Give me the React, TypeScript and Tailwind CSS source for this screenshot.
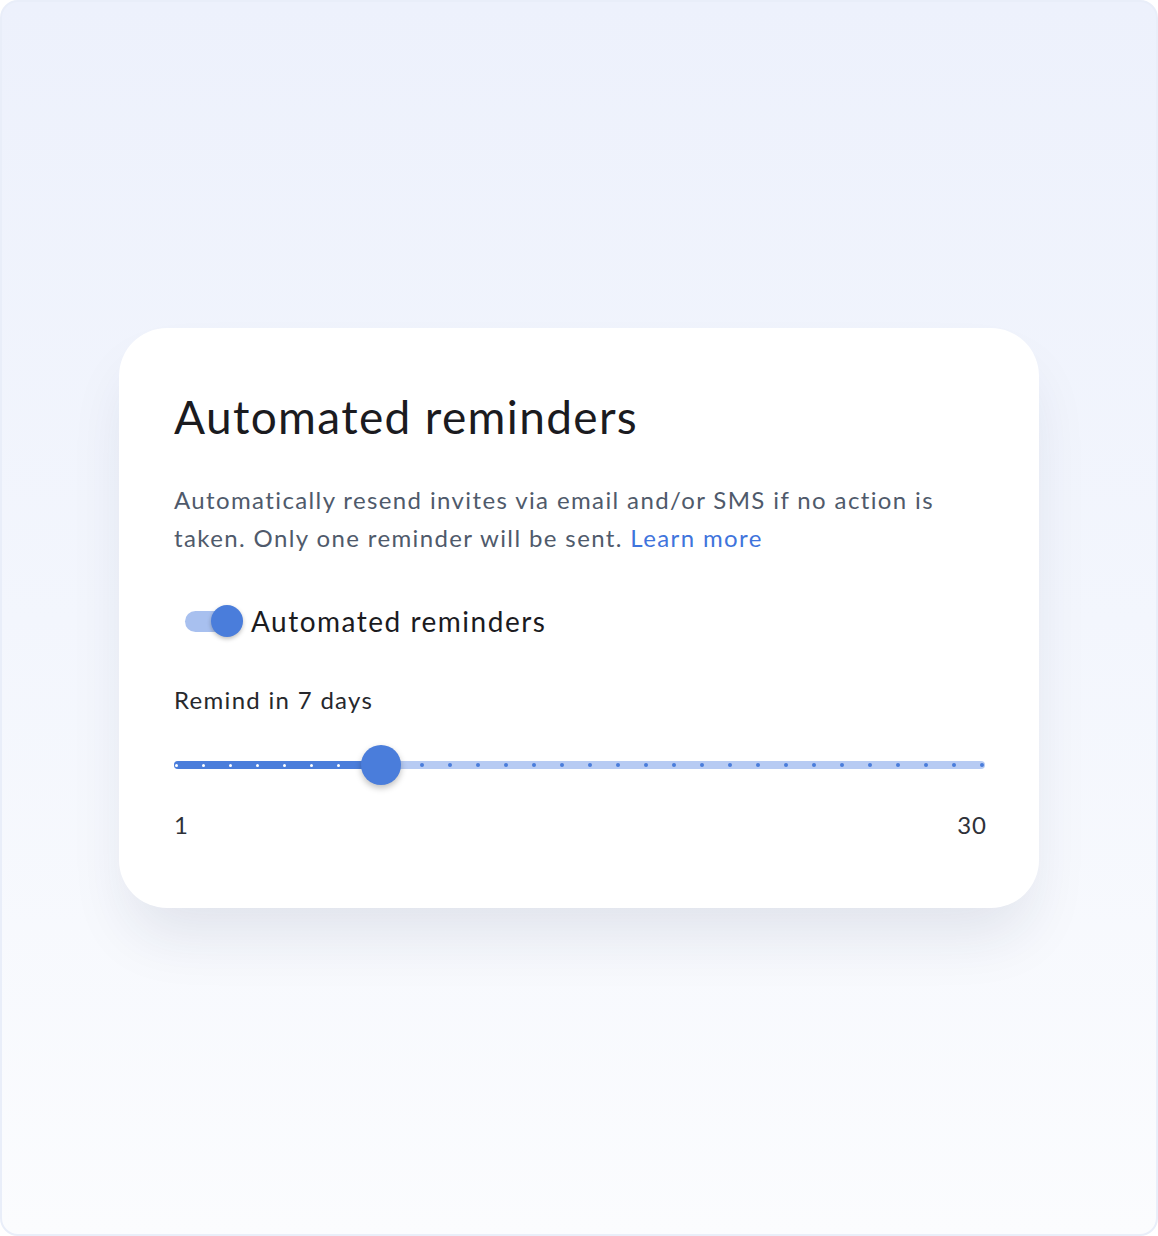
import React from 'react';

const TOTAL = 30;
const VALUE = 7;

const App: React.FC = () => {
    const dots = Array.from({ length: TOTAL }, (_, i) => i);

    return (
        <div className="w-[1158px] h-[1236px] p-0 bg-white" style={{ fontFamily: 'Lato, "Noto Sans", sans-serif' }}>
            <div className="w-full h-full rounded-[18px] border-2 border-[#e9eef9] bg-gradient-to-b from-[#edf1fc] via-[#f3f6fd] to-[#fbfcfe] flex flex-col items-center pt-[326px]">
                {/* Card */}
                <div className="w-[920px] bg-white rounded-[48px] shadow-[0_36px_60px_-10px_rgba(30,40,80,0.10)] pl-[55px] pr-[54px] pt-[61px] pb-[67px]">
                    <h1 className="text-[46px] leading-[56px] text-[#1b1b1f] tracking-[1.35px]">Automated reminders</h1>

                    <p className="mt-[36px] text-[24px] leading-[38px] text-[#4f5a6b] tracking-[1.38px]">
                        Automatically resend invites via email and/or SMS if no action is
                        <br />
                        taken. Only one reminder will be sent. <span className="text-[#3f74dc]">Learn more</span>
                    </p>

                    {/* Toggle */}
                    <div className="mt-[46px] flex items-center">
                        <div className="relative w-[58px] h-[34px] ml-[11px] flex items-center">
                            <div className="w-[50px] h-[21px] rounded-full bg-[#a8c0ef]" />
                            <div className="absolute left-[26px] top-[1px] w-[32px] h-[32px] rounded-full bg-[#4a7ddb] shadow-[0_2px_4px_rgba(0,0,0,0.25)]" />
                        </div>
                        <span className="ml-[8px] text-[28px] leading-[36px] text-[#1b1b1f] tracking-[1.5px]">Automated reminders</span>
                    </div>

                    <div className="mt-[45px] text-[24px] leading-[32px] text-[#26282d] tracking-[1.3px]">Remind in {VALUE} days</div>

                    {/* Slider */}
                    <div className="relative mt-[29px] h-[40px] flex items-center">
                        <div className="absolute left-0 right-0 h-[8px] rounded-full bg-[#b7cbf3]" />
                        <div className="absolute left-0 w-[210px] h-[8px] rounded-full bg-[#4a7ddb]" />
                        <div className="absolute inset-x-0 flex justify-between items-center px-[1px]">
                            {dots.map((i) => (
                                <span
                                    key={i}
                                    className={
                                        i < VALUE
                                            ? 'w-[3px] h-[3px] rounded-full bg-white'
                                            : 'w-[4px] h-[4px] rounded-full bg-[#4a7ddb]'
                                    }
                                />
                            ))}
                        </div>
                        <div className="absolute left-[187px] w-[40px] h-[40px] rounded-full bg-[#4a7ddb] shadow-[0_3px_6px_rgba(0,0,0,0.25)]" />
                    </div>

                    <div className="mt-[24px] flex justify-between text-[24px] leading-[32px] text-[#2e3138] tracking-[1px]">
                        <span>1</span>
                        <span className="mr-[-2px]">30</span>
                    </div>
                </div>
            </div>
        </div>
    );
};

export default App;
